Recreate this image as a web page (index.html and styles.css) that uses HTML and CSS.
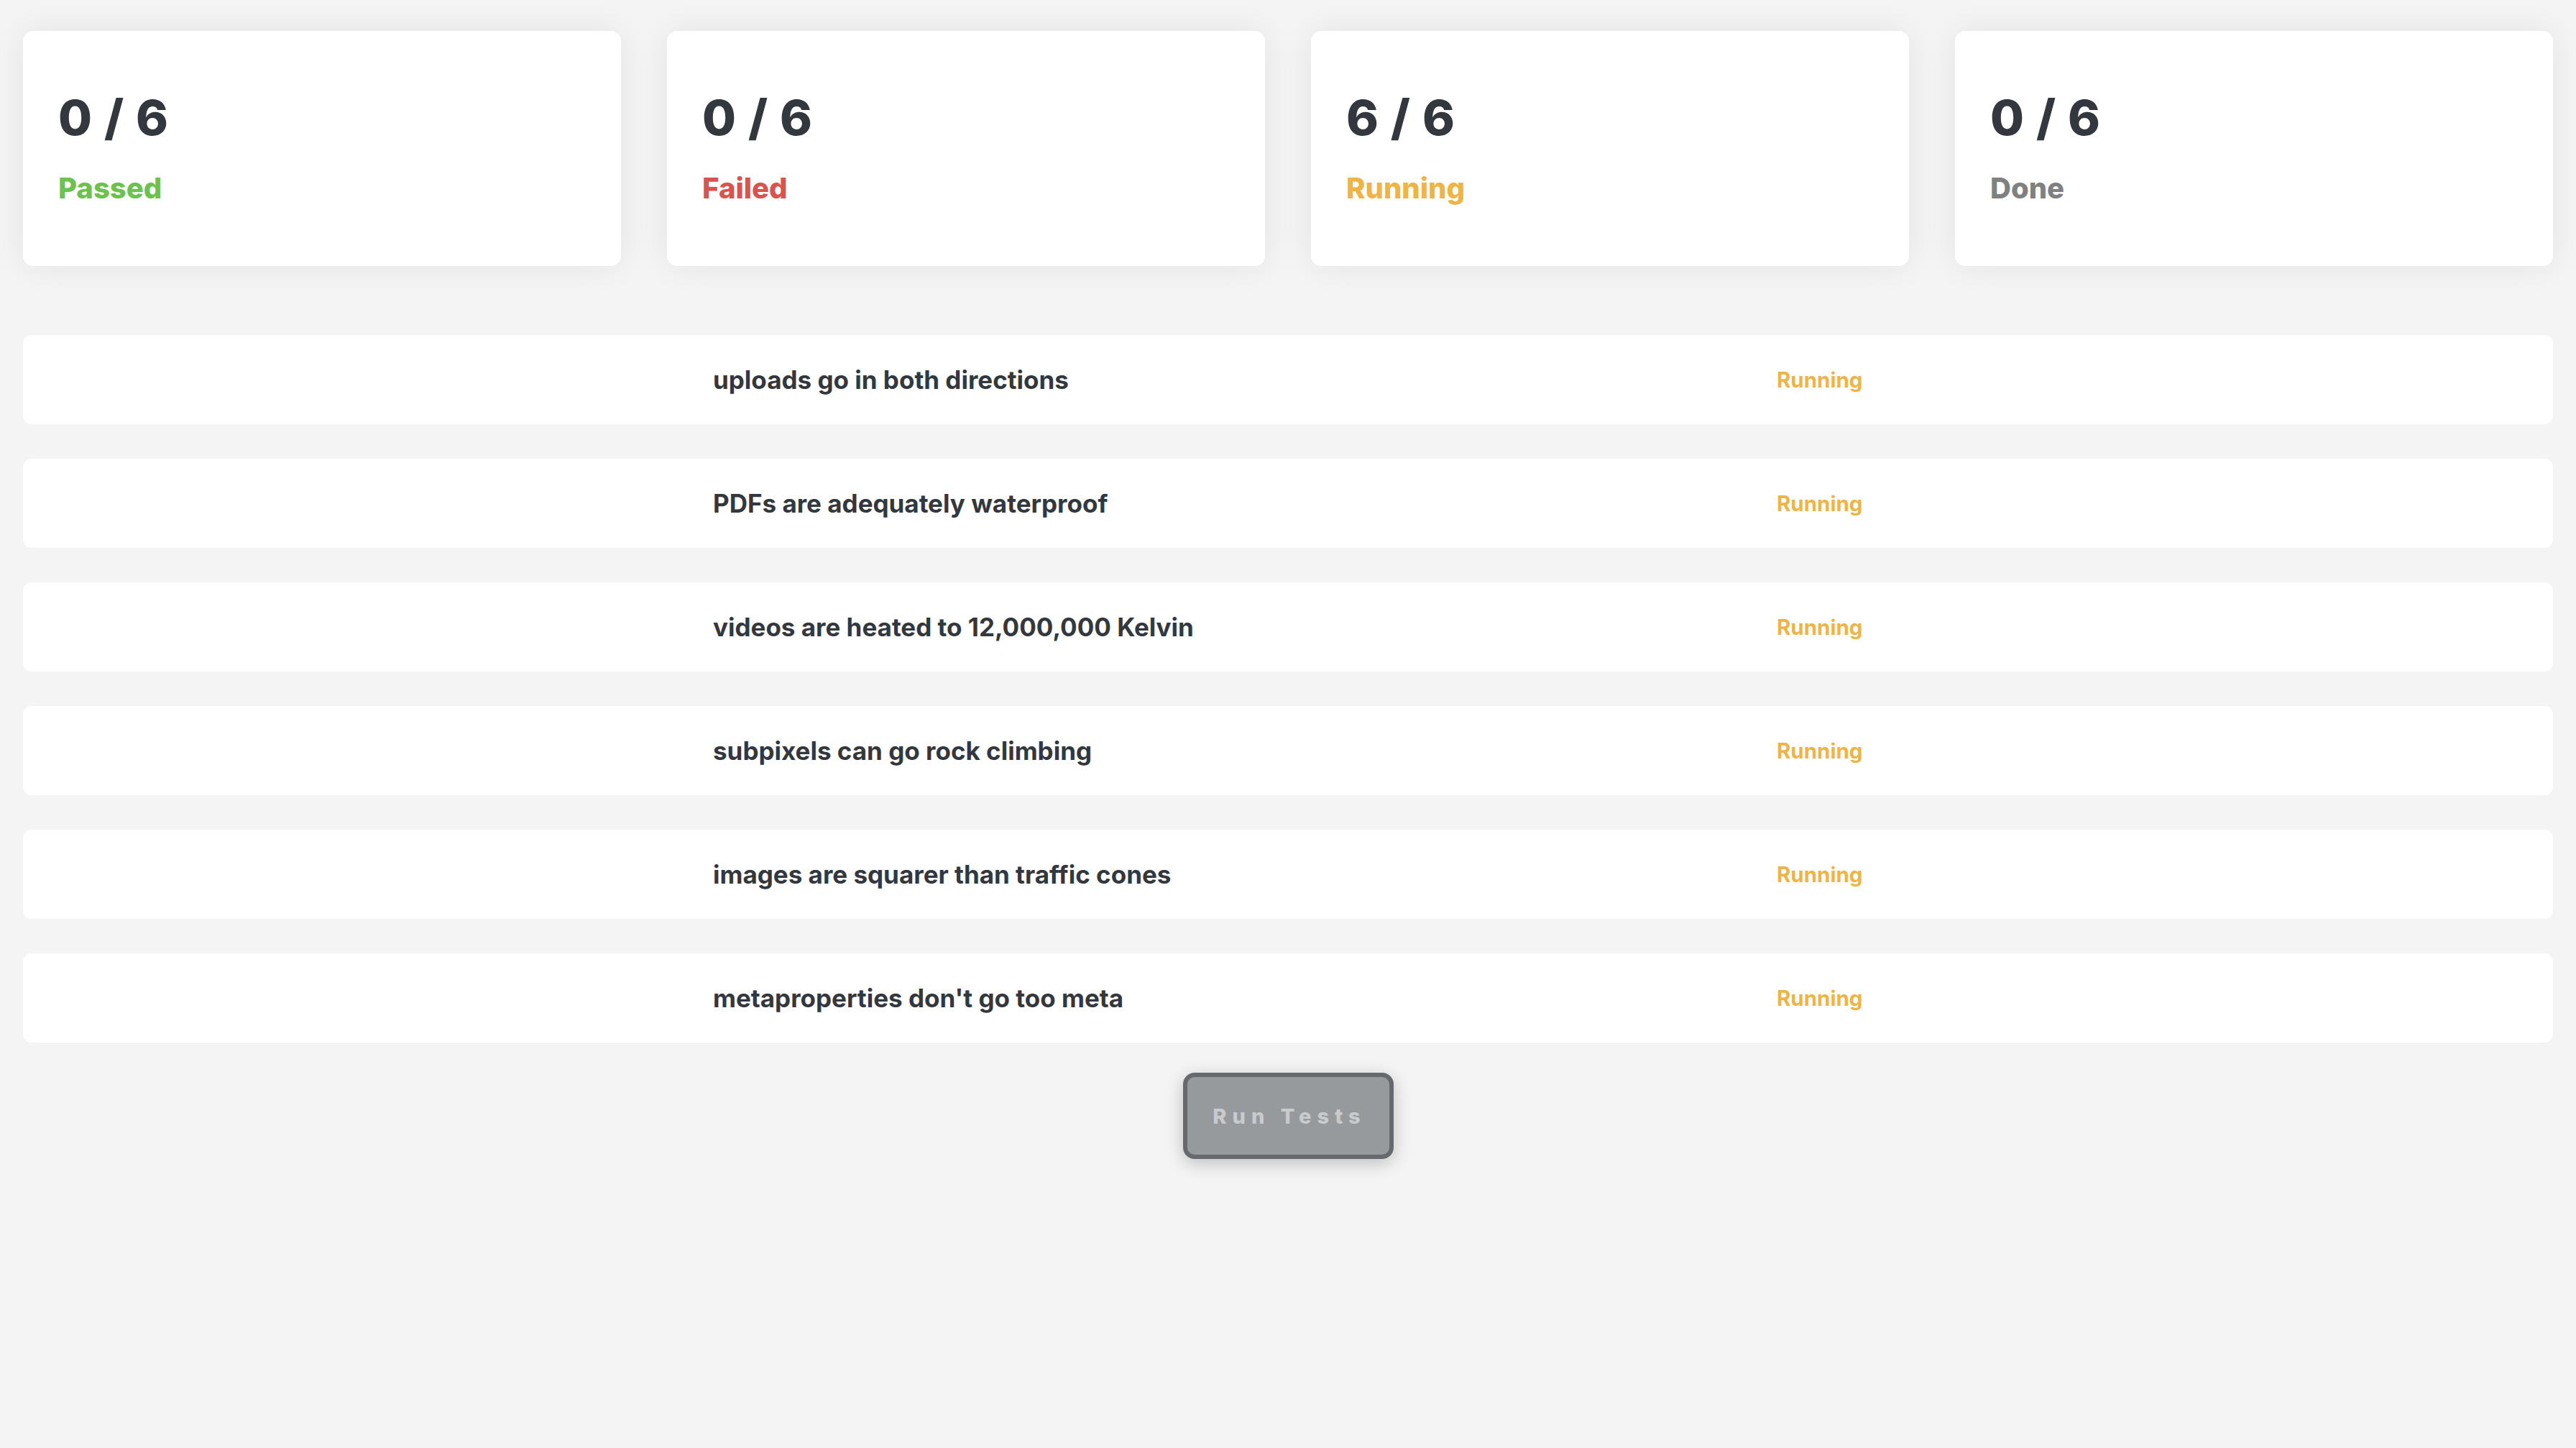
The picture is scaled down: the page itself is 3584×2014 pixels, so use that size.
FILE: index.html
```html
<!DOCTYPE html>
<html lang="en">
<head>
<meta charset="utf-8">
<title>Test Runner</title>
<link rel="stylesheet" href="styles.css">
</head>
<body>
<main class="page">
  <section class="summary">
    <div class="card">
      <div class="count">0 / 6</div>
      <div class="label passed">Passed</div>
    </div>
    <div class="card">
      <div class="count">0 / 6</div>
      <div class="label failed">Failed</div>
    </div>
    <div class="card">
      <div class="count">6 / 6</div>
      <div class="label running">Running</div>
    </div>
    <div class="card">
      <div class="count">0 / 6</div>
      <div class="label done">Done</div>
    </div>
  </section>

  <section class="tests">
    <div class="test-row">
      <div class="cell-icon"></div>
      <div class="cell-desc">uploads go in both directions</div>
      <div class="cell-status running">Running</div>
    </div>
    <div class="test-row">
      <div class="cell-icon"></div>
      <div class="cell-desc">PDFs are adequately waterproof</div>
      <div class="cell-status running">Running</div>
    </div>
    <div class="test-row">
      <div class="cell-icon"></div>
      <div class="cell-desc">videos are heated to 12,000,000 Kelvin</div>
      <div class="cell-status running">Running</div>
    </div>
    <div class="test-row">
      <div class="cell-icon"></div>
      <div class="cell-desc">subpixels can go rock climbing</div>
      <div class="cell-status running">Running</div>
    </div>
    <div class="test-row">
      <div class="cell-icon"></div>
      <div class="cell-desc">images are squarer than traffic cones</div>
      <div class="cell-status running">Running</div>
    </div>
    <div class="test-row">
      <div class="cell-icon"></div>
      <div class="cell-desc">metaproperties don't go too meta</div>
      <div class="cell-status running">Running</div>
    </div>
  </section>

  <div class="actions">
    <button class="run-btn" type="button" disabled>Run Tests</button>
  </div>
</main>
</body>
</html>
```

FILE: styles.css
```css
* {
  box-sizing: border-box;
}

html, body {
  margin: 0;
  padding: 0;
}

body {
  background: #f4f4f4;
  font-family: Inter, "Noto Sans", "DejaVu Sans", sans-serif;
  font-weight: 700;
  color: #33383e;
  min-height: 2014px;
}

.page {
  padding: 43px 32px 0 32px;
}

.summary {
  display: grid;
  grid-template-columns: repeat(4, 1fr);
  gap: 64px;
}

.card {
  background: #ffffff;
  border-radius: 14px;
  height: 327px;
  padding: 80px 50px 0 49px;
  box-shadow: 0 0 48px rgba(0, 0, 0, 0.07);
}

.count {
  font-size: 68px;
  line-height: 80px;
  font-weight: 800;
  color: #33383e;
  letter-spacing: 1px;
}

.label {
  margin-top: 35px;
  font-size: 40px;
  line-height: 48px;
  font-weight: 800;
}

.passed { color: #6cc24f; }
.failed { color: #d9534f; }
.running { color: #efb444; }
.done { color: #808080; }

.tests {
  margin-top: 96px;
  display: flex;
  flex-direction: column;
  gap: 48px;
}

.test-row {
  background: #ffffff;
  border-radius: 12px;
  height: 124px;
  display: grid;
  grid-template-columns: 960px 1480px 1fr;
  align-items: center;
}

.cell-desc {
  font-size: 35px;
  font-weight: 700;
  color: #33383e;
}

.cell-status {
  font-size: 29.5px;
  font-weight: 700;
}

.actions {
  margin-top: 42px;
  display: flex;
  justify-content: center;
}

.run-btn {
  width: 293px;
  height: 120px;
  border: 6px solid #66696d;
  border-radius: 16px;
  background: #979a9d;
  color: #c9cacb;
  font-family: Inter, "Noto Sans", "DejaVu Sans", sans-serif;
  font-size: 29px;
  font-weight: 800;
  letter-spacing: 8px;
  padding: 0 0 0 4px;
  box-shadow: 0 6px 24px rgba(0, 0, 0, 0.22);
}
```
